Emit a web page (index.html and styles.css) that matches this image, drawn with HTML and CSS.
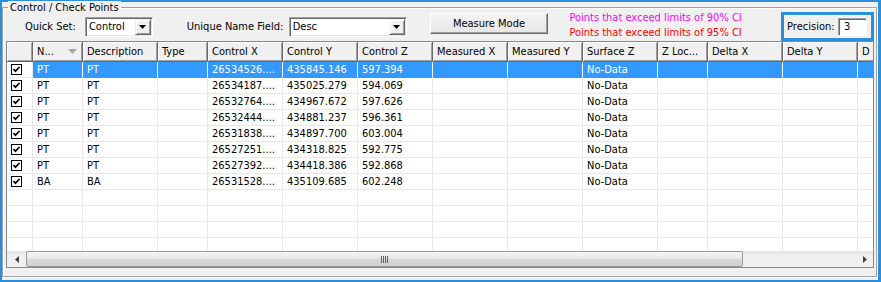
FILE: index.html
```html
<!DOCTYPE html>
<html>
<head>
  <title>Control / Check Points</title>
  <link rel="stylesheet" href="styles.css">
</head>
<body>
  <div class="window">
    <div class="group">
      <span class="group-title">Control / Check Points</span>

      <div class="toolbar">
        <span class="label quick-label">Quick Set:</span>
        <div class="combo quick-combo">
          <span class="combo-text">Control</span>
          <span class="combo-btn"><svg width="7" height="4" viewBox="0 0 7 4"><polygon points="0,0 7,0 3.5,4" fill="#000"/></svg></span>
        </div>

        <span class="label name-label">Unique Name Field:</span>
        <div class="combo name-combo">
          <span class="combo-text">Desc</span>
          <span class="combo-btn"><svg width="7" height="4" viewBox="0 0 7 4"><polygon points="0,0 7,0 3.5,4" fill="#000"/></svg></span>
        </div>

        <button class="btn" type="button">Measure Mode</button>

        <div class="notes">
          <div class="n90">Points that exceed limits of 90% CI</div>
          <div class="n95">Points that exceed limits of 95% CI</div>
        </div>

        <div class="precision">
          <span>Precision:</span>
          <span class="precision-input">3</span>
        </div>
      </div>

      <div class="grid">
        <div class="grid-head">
          <span class="hcell"></span>
          <span class="hcell">N...<svg class="sort" width="9" height="5" viewBox="0 0 9 5"><polygon points="0,0 9,0 4.5,5" fill="#a8a8a8"/></svg></span>
          <span class="hcell">Description</span>
          <span class="hcell">Type</span>
          <span class="hcell">Control X</span>
          <span class="hcell">Control Y</span>
          <span class="hcell">Control Z</span>
          <span class="hcell">Measured X</span>
          <span class="hcell">Measured Y</span>
          <span class="hcell">Surface Z</span>
          <span class="hcell">Z Loc...</span>
          <span class="hcell">Delta X</span>
          <span class="hcell">Delta Y</span>
          <span class="hcell">D</span>
        </div>

        <div class="grid-body" id="rows"></div>

        <div class="hscroll">
          <span class="sb-arrow"><svg width="4" height="7" viewBox="0 0 4 7"><polygon points="4,0 4,7 0,3.5" fill="#404040"/></svg></span>
          <span class="sb-thumb"><svg width="7" height="7" viewBox="0 0 7 7"><path d="M0.5 0V7M2.5 0V7M4.5 0V7M6.5 0V7" stroke="#606060"/></svg></span>
          <span class="sb-track"></span>
          <span class="sb-arrow sb-right"><svg width="4" height="7" viewBox="0 0 4 7"><polygon points="0,0 0,7 4,3.5" fill="#404040"/></svg></span>
        </div>
      </div>
    </div>
  </div>

  <script>
// point, desc, control x, y, z
const points = [
  ['PT', 'PT', '26534526....', '435845.146', '597.394'],
  ['PT', 'PT', '26534187....', '435025.279', '594.069'],
  ['PT', 'PT', '26532764....', '434967.672', '597.626'],
  ['PT', 'PT', '26532444....', '434881.237', '596.361'],
  ['PT', 'PT', '26531838....', '434897.700', '603.004'],
  ['PT', 'PT', '26527251....', '434318.825', '592.775'],
  ['PT', 'PT', '26527392....', '434418.386', '592.868'],
  ['BA', 'BA', '26531528....', '435109.685', '602.248']
];

const check = '<svg width="11" height="11" viewBox="0 0 11 11">' +
  '<rect x="0.5" y="0.5" width="10" height="10" fill="#fff" stroke="#000"/>' +
  '<polyline points="2.5,5 4.5,7.2 8.5,3" fill="none" stroke="#000" stroke-width="1.7"/></svg>';

const rows = document.getElementById('rows');
let html = '';
points.forEach(function(p, i) {
  const cells = ['<span class="cell chk">' + check + '</span>',
    p[0], p[1], '', p[2], p[3], p[4], '', '', 'No-Data', '', '', '', ''];
  html += '<div class="row' + (i === 0 ? ' sel' : '') + '">';
  cells.forEach(function(c, j) {
    html += j === 0 ? c : '<span class="cell">' + c + '</span>';
  });
  html += '</div>';
});
// empty rows below the data
for (let i = 0; i < 4; i++) {
  html += '<div class="row">' + '<span class="cell"></span>'.repeat(14) + '</div>';
}
rows.innerHTML = html;
  </script>
</body>
</html>
```

FILE: styles.css
```css
* {
  box-sizing: border-box;
}

body {
  margin: 0;
  font-family: "DejaVu Sans Condensed", "DejaVu Sans", sans-serif;
  font-stretch: condensed;
  font-size: 11px;
  color: #000;
}

.window {
  width: 881px;
  height: 282px;
  border: 2px solid #2b90d9;
  border-right-width: 3px;
  background: #f0f0f0;
  padding: 5px 1px 0 0;
}

.group {
  position: relative;
  height: 270px;
  border: 1px solid #a0a0a0;
  box-shadow: inset 1px 1px #fff, 1px 1px #fff;
  padding: 0 2px 8px 3px;
}

.group-title {
  position: absolute;
  top: -7px;
  left: 5px;
  padding: 0 2px;
  line-height: 13px;
  background: #f0f0f0;
}

/* top row of controls */
.toolbar {
  display: flex;
  align-items: flex-start;
  height: 33px;
}

.label {
  height: 20px;
  line-height: 20px;
  margin-top: 9px;
  white-space: nowrap;
}

.quick-label {
  width: 60px;
  margin-left: 19px;
}

.name-label {
  width: 102px;
  margin-left: 34px;
}

.combo {
  display: flex;
  height: 20px;
  margin-top: 9px;
  background: #fff;
  border: 1px solid;
  border-color: #a0a0a0 #fff #fff #a0a0a0;
  box-shadow: inset 1px 1px #696969, inset -1px -1px #e3e3e3;
}

.quick-combo {
  width: 68px;
}

.name-combo {
  width: 118px;
}

.combo-text {
  flex: 1;
  padding-left: 3px;
  line-height: 18px;
}

.combo-btn {
  display: flex;
  align-items: center;
  justify-content: center;
  width: 16px;
  height: 16px;
  margin: 1px 1px 0 0;
  background: #f0f0f0;
  border: 1px solid;
  border-color: #f0f0f0 #696969 #696969 #f0f0f0;
  box-shadow: inset 1px 1px #fff, inset -1px -1px #a0a0a0;
}

.btn {
  width: 119px;
  height: 21px;
  margin: 5px 0 0 23px;
  padding: 1px 0 0;
  font: inherit;
  line-height: 18px;
  color: #000;
  background: linear-gradient(#f4f4f4, #e6e6e6);
  border: 1px solid;
  border-color: #fff #696969 #696969 #fff;
  box-shadow: inset -1px -1px #a0a0a0;
}

.notes {
  width: 212px;
  margin: 2px 0 0 21px;
  line-height: 15px;
  white-space: nowrap;
}

.n90 {
  color: #ff00ff;
}

.n95 {
  color: #ff0000;
}

.precision {
  display: flex;
  align-items: center;
  width: 93px;
  height: 29px;
  margin-top: 4px;
  padding: 0 4px 0 3px;
  border: 3px solid #2b90d9;
}

.precision-input {
  width: 29px;
  height: 18px;
  margin-left: auto;
  padding-left: 5px;
  line-height: 16px;
  background: #fff;
  border: 1px solid;
  border-color: #a0a0a0 #fff #fff #a0a0a0;
  box-shadow: inset 1px 1px #696969;
}

/* list view */
.grid {
  width: 868px;
  height: 227px;
  background: #fff;
  border: 1px solid #828790;
  overflow: hidden;
}

.grid-head,
.row {
  display: grid;
  grid-template-columns: 26px 50px 75px 50px 75px 75px 75px 75px 75px 75px 50px 75px 75px 75px;
  width: 926px;
}

.grid-head {
  height: 20px;
  background: #f0f0f0;
  border-bottom: 1px solid #696969;
}

.hcell {
  display: flex;
  align-items: center;
  padding-left: 4px;
  white-space: nowrap;
  overflow: hidden;
  border-right: 1px solid #696969;
  box-shadow: inset 1px 1px #fff, inset -1px -1px #a0a0a0;
}

.sort {
  margin: 0 5px 0 auto;
}

.grid-body {
  height: 189px;
  overflow: hidden;
}

.row {
  height: 16px;
}

.cell {
  padding-left: 4px;
  line-height: 15px;
  white-space: nowrap;
  overflow: hidden;
  border-right: 1px solid #e8e8e8;
  border-bottom: 1px solid #e8e8e8;
}

.chk {
  padding-top: 2px;
}

.chk svg {
  display: block;
}

.row.sel .cell + .cell {
  background: #3399ff;
  color: #fff;
  border-right-color: #fff;
  border-bottom-color: #3399ff;
}

/* horizontal scrollbar */
.hscroll {
  display: flex;
  height: 16px;
  background: linear-gradient(#e4e4e4, #f0f0f0 30%, #f0f0f0);
}

.sb-arrow {
  display: flex;
  align-items: center;
  justify-content: center;
  width: 19px;
}

.sb-right {
  width: 16px;
  margin-left: auto;
}

.sb-thumb {
  display: flex;
  align-items: center;
  justify-content: center;
  width: 717px;
  border: 1px solid #979797;
  border-radius: 2px;
  background: linear-gradient(#f6f6f6, #e9e9e9 45%, #d9d9d9 50%, #d0d0d0);
}

.sb-track {
  flex: 1;
}
```
